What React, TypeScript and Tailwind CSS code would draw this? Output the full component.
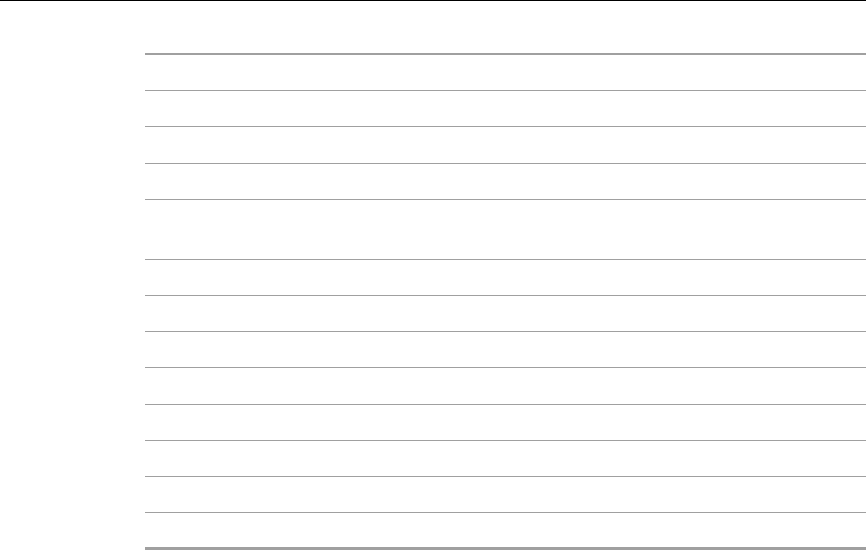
import React from "react";

export default function App() {
  const rows = [0, 1, 2, 3, 4, 5, 6, 7, 8, 9, 10, 11];
  return (
    <div className="w-[866px] h-[550px] bg-white overflow-hidden flex flex-col" style={{ fontFamily: '"Liberation Sans", Arial, sans-serif' }}>
      <div className="h-px w-full bg-black shrink-0" />
      <div className="ml-[145px] mt-[52px] w-[721px] flex flex-col border-t-2 border-[#a0a0a0]">
        {rows.map((i) => (
          <div
            key={i}
            className={`${i === 4 ? "h-[60px]" : "h-[36.2px]"} border-b border-[#a0a0a0] shrink-0`}
          />
        ))}
        <div className="h-[37.2px] border-b-[3px] border-[#a0a0a0] shrink-0" />
      </div>
    </div>
  );
}
